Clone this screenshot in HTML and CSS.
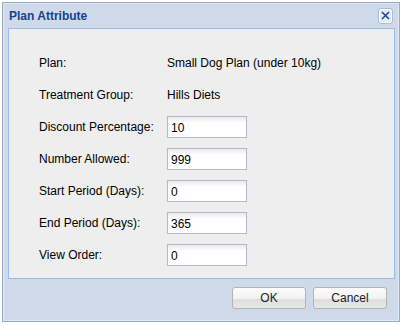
FILE: index.html
```html
<!DOCTYPE html>
<html>
  <head>
    <title>Plan Attribute</title>
    <link rel="stylesheet" href="styles.css">
  </head>
  <body>
    <div class="window">
      <div class="header">
        <span class="title">Plan Attribute</span>
        <span class="close">
          <svg width="9" height="9" viewBox="0 0 9 9"><path d="M1 1L8 8M8 1L1 8" stroke="#15428b" stroke-width="1.5"/></svg>
        </span>
      </div>
      <div class="body">
        <div class="row"><label>Plan:</label><span class="value">Small Dog Plan (under 10kg)</span></div>
        <div class="row"><label>Treatment Group:</label><span class="value">Hills Diets</span></div>
        <div class="row"><label>Discount Percentage:</label><input class="field" value="10"></div>
        <div class="row"><label>Number Allowed:</label><input class="field" value="999"></div>
        <div class="row"><label>Start Period (Days):</label><input class="field" value="0"></div>
        <div class="row"><label>End Period (Days):</label><input class="field" value="365"></div>
        <div class="row"><label>View Order:</label><input class="field" value="0"></div>
      </div>
      <div class="footer">
        <button class="btn">OK</button>
        <button class="btn">Cancel</button>
      </div>
    </div>
  </body>
</html>
```

FILE: styles.css
```css
body { margin: 0; background: #fff; font-family: "Liberation Sans", Arial, sans-serif; font-size: 12px; color: #000; }

.window {
  margin: 2px 0 0 2px;
  width: 396px;
  height: 318px;
  border: 1px solid #99a9c0;
  box-shadow: inset 0 0 0 1px #dfe8f4;
  background: #cedaea;
  display: flex;
  flex-direction: column;
}
.header { display: flex; align-items: center; justify-content: space-between; height: 25px; padding: 0 7px 0 6px; }
.title { font-weight: bold; font-size: 12px; color: #15428b; }
.close {
  width: 11px; height: 12px;
  border: 1px solid #fff;
  outline: 1px solid #a9bfdc;
  border-radius: 2px;
  background: #e4ecf6;
  display: flex; align-items: center; justify-content: center;
}

.body {
  margin: 0 4px 0 5px;
  height: 251px;
  border: 1px solid #99bbe8;
  background: #eeeeee;
  padding: 18px 0 0 30px;
  box-sizing: border-box;
}
.row { display: flex; align-items: center; height: 32px; }
.row label { width: 128px; }
.field {
  width: 80px; height: 22px;
  box-sizing: border-box;
  border: 1px solid #b5b8c8;
  background: linear-gradient(#e9e9e9, #fff 6px);
  font-family: "Liberation Sans", Arial, sans-serif;
  font-size: 12px;
  padding: 1px 3px 0;
  margin: 0;
}

.footer { display: flex; justify-content: flex-end; gap: 7px; padding: 8px 12px 0 0; }
.btn {
  width: 74px; height: 22px;
  border: 1px solid #b3b3b3;
  border-radius: 3px;
  background: linear-gradient(#fbfbfb, #f2f2f2 55%, #dedede 56%, #e8e8e8);
  font-family: "Liberation Sans", Arial, sans-serif;
  font-size: 12px;
  color: #222;
  padding: 0;
}
```
